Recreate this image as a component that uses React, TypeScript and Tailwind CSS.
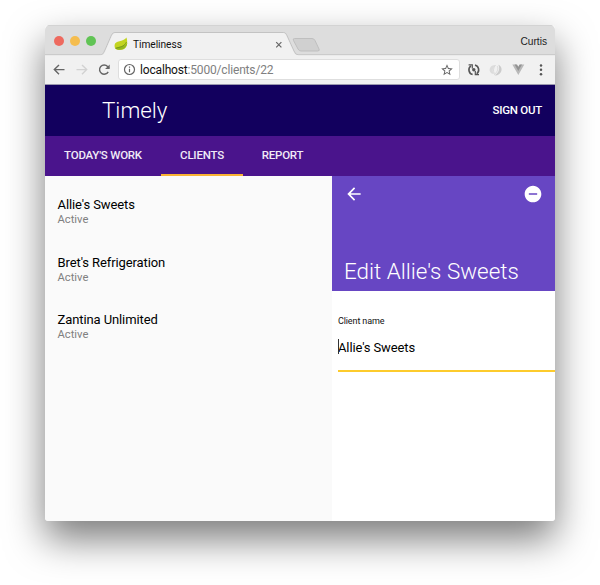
import React from "react";

const clients = ["Allie's Sweets", "Bret's Refrigeration", "Zantina Unlimited"];

function TabStrip() {
  return (
    <div className="relative flex h-[30px] shrink-0 items-center bg-[#dddddd]">
      <svg className="absolute inset-0" width="510" height="31" viewBox="0 0 510 31">
        <path d="M0 .5H510" stroke="#d3d3d3" />
        <path d="M0 29.8H54C58 29.8 58 29 60 25L66.500 10Q67.500 7.500 70 7.500H238.500Q240.500 7.500 241.500 9.500L249 26Q250.500 29.800 253 29.800H510" fill="none" stroke="#c3c3c3" />
        <path d="M0 30.500H55C58 30.500 59 29 60.500 25.500L67 10.500Q68 8 70 8H238.500Q240 8 241 10L248.500 26.500Q250.500 30.500 253 30.500H510V31H0Z" fill="#f1f1f1" />
        <path d="M249.500 13.500H267Q269 13.500 270 15.500L274 24Q275 26 272.500 26H256Q254 26 253 24L248.500 15.500Q247.500 13.500 249.500 13.500Z" fill="#d0d0d0" stroke="#bfbfbf" />
      </svg>
      <div className="relative flex w-full items-center">
        <div className="flex gap-[6px] pt-px pl-[9px]">
          <i className="size-[10px] rounded-full bg-[#ee6a5f]" />
          <i className="size-[10px] rounded-full bg-[#f5bd4f]" />
          <i className="size-[10px] rounded-full bg-[#61c455]" />
        </div>
        <svg className="mt-[8px] ml-[18px]" width="14" height="14" viewBox="0 0 14 14">
          <path d="M12.500 .5C14 6 13.500 12.500 7 12.800C2 13.500 .3 11.500 .6 8C1.200 3 9 5.500 12.500 .5Z" fill="#c2d420" />
          <path d="M13.300 6C10 10 6 9 1.500 11.300C3 13 5 13 6.500 12.700C10.500 12.500 12.800 9.500 13.300 6Z" fill="#93b71e" />
          <path d="M1.500 11.300C6 9.800 10 10 12.500 5" fill="none" stroke="#6b8f18" strokeWidth=".8" />
        </svg>
        <span className="mt-[9px] ml-[5px] w-[135px] text-[10.200px] leading-[14px] tracking-[-0.050px] text-[#111]">Timeliness</span>
        <svg className="mt-[9px] ml-[7px]" width="8" height="8" viewBox="0 0 8 8" stroke="#666" strokeWidth="1.200">
          <path d="M1.200 1.200L6.400 6.400M6.400 1.200L1.200 6.400" />
        </svg>
        <span className="mt-[3px] mr-[8px] ml-auto font-['Liberation_Sans',sans-serif] text-[10.200px] leading-[14px] text-[#222]">Curtis</span>
      </div>
    </div>
  );
}

function Toolbar() {
  return (
    <div className="flex h-[30px] shrink-0 items-center border-b border-[#9b99ae] bg-[#f1f1f1] pl-[8px]">
      <svg width="60" height="14" viewBox="0 0 60 14" fill="none" strokeWidth="1.400">
        <path d="M11.500 6.600H1.500M6 1.900L1.300 6.600L6 11.300" stroke="#666" />
        <path d="M23.500 6.600H33.500M29 1.900L33.700 6.600L29 11.300" stroke="#d2d2d2" />
        <path d="M55.200 8.800A4.600 4.600 0 1 1 54.600 3.500L56 4.700" stroke="#666" />
        <path d="M56.700 1.400V6H52.100Z" fill="#666" />
      </svg>
      <div className="ml-[5px] flex h-[21px] w-[342px] items-center rounded-[3px] border border-[#dedede] bg-white pr-[5px] pl-[4px]">
        <svg width="13" height="13" viewBox="0 0 13 13" fill="none" stroke="#666">
          <circle cx="6.500" cy="6.500" r="5" strokeWidth="1.200" />
          <path d="M6.500 5.800V9.300M6.500 3.600V4.800" strokeWidth="1.200" />
        </svg>
        <span className="ml-[4px] text-[12px] leading-[16px] tracking-[-0.170px] text-[#808080]"><span className="text-[#111]">localhost</span>:5000/clients/22</span>
        <svg className="ml-auto" width="14" height="14" viewBox="0 0 24 24" fill="#666">
          <path d="M22 9.240l-7.190-.62L12 2 9.190 8.630 2 9.240l5.460 4.730L5.820 21 12 17.270 18.180 21l-1.630-7.030L22 9.240zM12 15.400l-3.760 2.270 1-4.280-3.320-2.880 4.380-.38L12 6.100l1.710 4.040 4.380.38-3.320 2.880 1 4.280L12 15.400z" />
        </svg>
      </div>
      <svg className="ml-[7px]" width="80" height="14" viewBox="0 0 80 14" fill="none">
        <path d="M3.900 2.800A5 5 0 0 0 5.600 11.600M9.700 10.800A5 5 0 0 0 8 2" stroke="#555" strokeWidth="1.600" />
        <path d="M1.600 1.900H5.300V5.600M12 11.700H8.300V8" stroke="#555" strokeWidth="1.200" />
        <circle cx="6.800" cy="6.800" r="1.700" fill="#555" />
        <path d="M28.500 2C24.500 1.800 22.200 4.800 22.700 7.700C23.200 10 25.200 11.200 27.300 10.700C25 9 25.300 5 28.500 2Z" fill="#dcdcdc" />
        <path d="M31.300 1.800C34.500 3 35.500 6.500 33.800 9.300C32.500 11.700 30 12.700 27.500 12.300C31.500 10.300 33.400 6 31.300 1.800Z" fill="#cccccc" />
        <path d="M28.500 2.200C26.300 4.500 26 8 27.300 10.700M30.300 3.200C31.500 6 30.500 9 27 11.800" stroke="#cfcfcf" strokeWidth=".7" />
        <path d="M45.300 1.500H49L51.300 5.500L53.600 1.500H57.300L51.300 12Z" fill="#b9b9b9" />
        <path d="M47.600 1.500H50L51.300 3.800L52.600 1.500H55L51.300 8Z" fill="#929292" />
        <circle cx="74" cy="2.400" r="1.250" fill="#555" />
        <circle cx="74" cy="6.800" r="1.250" fill="#555" />
        <circle cx="74" cy="11.200" r="1.250" fill="#555" />
      </svg>
    </div>
  );
}

function ClientPanel() {
  return (
    <section className="w-[223.500px] bg-white">
      <div className="flex h-[115px] flex-col justify-between bg-[#6746c3] text-white">
        <div className="flex justify-between pt-[8px] pr-[12.500px] pl-[12px]">
          <svg width="20" height="20" viewBox="0 0 24 24" fill="white"><path d="M20 11H7.830l5.590-5.590L12 4l-8 8 8 8 1.410-1.410L7.830 13H20v-2z" /></svg>
          <svg width="20" height="20" viewBox="0 0 24 24" fill="white"><path d="M12 2C6.480 2 2 6.480 2 12s4.480 10 10 10 10-4.480 10-10S17.520 2 12 2zm5 11H7v-2h10v2z" /></svg>
        </div>
        <h2 className="pb-[6px] pl-[12.500px] text-[22.400px] leading-[28px] font-light whitespace-nowrap">Edit Allie's Sweets</h2>
      </div>
      <div className="pt-[25px] pl-[6.500px]">
        <label className="block text-[9px] leading-[11px] tracking-[-0.120px] text-[#111]">Client name</label>
        <div className="mt-[10px] flex h-[35px] items-start border-b-2 border-[#fdcb2c]">
          <div className="relative mt-[2px] text-[13px] leading-[17px] tracking-[-0.120px] text-black">
            <i className="absolute top-0 left-0 h-[15px] w-px bg-[#333]" />Allie's Sweets
          </div>
        </div>
      </div>
    </section>
  );
}

export default function App() {
  return (
    <div className="h-[585px] w-[600px] overflow-hidden bg-white pt-[25px] pl-[45px] font-[Roboto,sans-serif]">
      <div className="h-[496px] w-[510px] rounded-[4px] shadow-[0_18px_38px_rgba(0,0,0,0.52)]">
        <div className="flex h-full flex-col overflow-hidden rounded-t-[5px] rounded-b-[3px]">
          <TabStrip />
          <Toolbar />
          <header className="flex h-[51px] shrink-0 items-center justify-between bg-[#12005e] pr-[13px] pl-[57px] text-white">
            <h1 className="-mt-[2px] text-[22.400px] leading-[28px] font-light">Timely</h1>
            <button className="pt-px text-[11.500px] font-medium tracking-[-0.250px]">SIGN OUT</button>
          </header>
          <nav className="flex h-[40px] shrink-0 bg-[#4a148c] text-[11.500px] font-medium tracking-[-0.220px] text-[#f1eaf7]">
            <a className="flex w-[116px] items-center justify-center">TODAY'S WORK</a>
            <a className="flex w-[82px] items-center justify-center border-b-2 border-[#f9b233] pt-[2px]">CLIENTS</a>
            <a className="flex w-[79px] items-center justify-center">REPORT</a>
          </nav>
          <main className="flex min-h-0 flex-1">
            <ul className="flex w-[286.500px] shrink-0 flex-col bg-[#fafafa] pt-[21px] pl-[12.500px]">
              {clients.map((name) => (
                <li key={name} className="h-[57.500px]">
                  <div className="text-[13px] leading-[16px] tracking-[-0.100px] text-black">{name}</div>
                  <div className="text-[11.200px] leading-[13px] text-[#808080]">Active</div>
                </li>
              ))}
            </ul>
            <ClientPanel />
          </main>
        </div>
      </div>
    </div>
  );
}
